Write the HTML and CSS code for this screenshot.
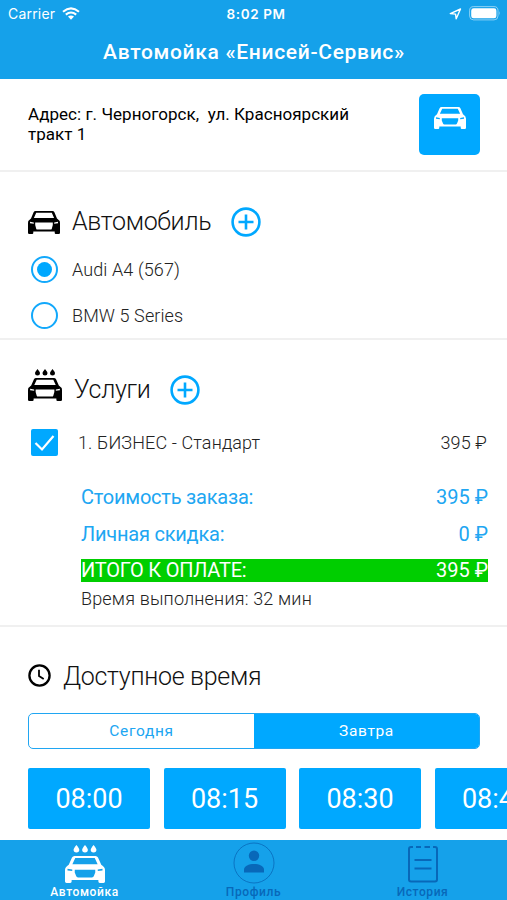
FILE: index.html
```
<!DOCTYPE html>
<html lang="ru">
<head>
  <meta charset="UTF-8">
  <meta name="viewport" content="width=device-width, initial-scale=1.0">
  <title>Автомойка «Енисей-Сервис»</title>
  <link rel="stylesheet" href="styles.css">
</head>
<body>
  <!-- Общие иконки -->
  <svg class="icon-defs" width="0" height="0">
    <symbol id="car" viewBox="0 0 32 22" preserveAspectRatio="none">
      <path fill-rule="evenodd" d="M7.6 0H24.4Q25.8 0 26.4 1.3L29 7.2Q32 9 32 11.5V20.8Q32 22 30.8 22H27.8Q26.7 22 26.7 20.8V19.5H5.3V20.8Q5.3 22 4.2 22H1.2Q0 22 0 20.8V11.5Q0 9 3 7.2L5.6 1.3Q6.2 0 7.6 0ZM8.2 1.7L5.9 6.7H26.1L23.8 1.7ZM2 10.3V11.8L5.8 12.3V11ZM30 10.3L26.2 11V12.3L30 11.8ZM7.8 11.3V13.4L9 16.6Q9.4 17.5 10.4 17.5H21.6Q22.6 17.5 23 16.6L24.2 13.4V11.3Z"/>
    </symbol>
    <symbol id="car-filled" viewBox="0 0 32 22" preserveAspectRatio="none">
      <path fill-rule="evenodd" d="M7.6 0H24.4Q25.8 0 26.4 1.3L29 7.2Q32 9 32 11.5V20.8Q32 22 30.8 22H27.8Q26.7 22 26.7 20.8V19.5H5.3V20.8Q5.3 22 4.2 22H1.2Q0 22 0 20.8V11.5Q0 9 3 7.2L5.6 1.3Q6.2 0 7.6 0ZM8.2 1.7L5.9 6.7H26.1L23.8 1.7ZM2 10.3V11.8L5.8 12.3V11ZM30 10.3L26.2 11V12.3L30 11.8ZM7.2 11V13.4L8.2 17Q8.5 17.8 9.4 17.8H22.6Q23.5 17.8 23.8 17L24.8 13.4V11Z"/>
    </symbol>
    <symbol id="drops" viewBox="0 0 34 7">
      <path d="M9.5 0Q12 3 12 4.2A2.4 2.3 0 0 1 7 4.2Q7 3 9.5 0ZM17 0Q19.5 3 19.5 4.2A2.4 2.3 0 0 1 14.5 4.2Q14.5 3 17 0ZM24.5 0Q27 3 27 4.2A2.4 2.3 0 0 1 22 4.2Q22 3 24.5 0Z"/>
    </symbol>
    <symbol id="plus" viewBox="0 0 30 30">
      <circle cx="15" cy="15" r="13.4" fill="none" stroke="currentColor" stroke-width="2.6"/>
      <path d="M15 7.5V22.5M7.5 15H22.5" fill="none" stroke="currentColor" stroke-width="2.6"/>
    </symbol>
  </svg>

  <div class="app">
    <header class="header">
      <div class="status-bar">
        <div class="carrier">
          <span>Carrier</span>
          <svg width="18" height="13" viewBox="0 0 18 13">
            <path d="M1 4.7Q9-2 17 4.7M3.8 7.6Q9 3.4 14.2 7.6" fill="none" stroke="#fff" stroke-width="2.1"/>
            <path d="M6 9.6Q9 7.3 12 9.6L9 12.7Z" fill="#fff"/>
          </svg>
        </div>
        <span class="clock">8:02 PM</span>
        <div class="indicators">
          <svg width="13" height="12" viewBox="0 0 13 12">
            <path d="M1.3 5.6L11.5 1L7.2 10.8L6.6 6.1Z" fill="none" stroke="#fff" stroke-width="1.4" stroke-linejoin="round"/>
          </svg>
          <svg width="32" height="15" viewBox="0 0 32 15">
            <rect x=".6" y=".6" width="28.4" height="13.3" rx="4" fill="none" stroke="#fff" stroke-opacity=".5"/>
            <rect x="2.2" y="2.3" width="25.2" height="10" rx="2.4" fill="#fff"/>
            <path d="M30.2 5Q31.6 7.2 30.2 9.5Z" fill="#fff" fill-opacity=".6"/>
          </svg>
        </div>
      </div>
      <h1>Автомойка «Енисей-Сервис»</h1>
    </header>

    <section class="address">
      <p>Адрес: г. Черногорск,  ул. Красноярский тракт 1</p>
      <button class="car-button">
        <svg width="32" height="22"><use href="#car"/></svg>
      </button>
    </section>

    <section class="cars">
      <div class="title">
        <svg width="32" height="23"><use href="#car-filled"/></svg>
        <h2 class="title-cars">Автомобиль</h2>
        <svg class="add" width="30" height="30"><use href="#plus"/></svg>
      </div>
      <div class="option">
        <span class="radio checked"></span>
        <span>Audi A4 (567)</span>
      </div>
      <div class="option">
        <span class="radio"></span>
        <span>BMW 5 Series</span>
      </div>
    </section>

    <section class="services">
      <div class="title">
        <svg class="wash-icon" width="34" height="32">
          <use href="#drops" width="34" height="7"/>
          <use href="#car-filled" y="9" width="34" height="23"/>
        </svg>
        <h2 class="title-services">Услуги</h2>
        <svg class="add" width="30" height="30"><use href="#plus"/></svg>
      </div>
      <div class="service">
        <span class="checkbox">
          <svg width="27" height="27" viewBox="0 0 27 27">
            <path d="M4.5 14L11 20.5L22.5 7" fill="none" stroke="#fff" stroke-width="2.2"/>
          </svg>
        </span>
        <span class="service-name">1. БИЗНЕС - Стандарт</span>
        <span class="price">395 ₽</span>
      </div>
      <div class="summary">
        <div class="sum-row"><span class="sum-label">Стоимость заказа:</span><span>395 ₽</span></div>
        <div class="sum-row"><span class="sum-label">Личная скидка:</span><span>0 ₽</span></div>
        <div class="sum-row total"><span class="sum-label">ИТОГО К ОПЛАТЕ:</span><span>395 ₽</span></div>
        <p class="duration">Время выполнения: 32 мин</p>
      </div>
    </section>

    <section class="schedule">
      <div class="title">
        <svg class="clock-icon" width="23" height="23" viewBox="0 0 23 23">
          <circle cx="11.5" cy="11.5" r="10.1" fill="none" stroke="#000" stroke-width="2.3"/>
          <path d="M11 5.7V12L15.7 15" fill="none" stroke="#000" stroke-width="1.8"/>
        </svg>
        <h2 class="title-schedule">Доступное время</h2>
      </div>
      <div class="days">
        <span class="day">Сегодня</span>
        <span class="day active">Завтра</span>
      </div>
      <div class="slots">
        <span class="slot">08:00</span>
        <span class="slot">08:15</span>
        <span class="slot">08:30</span>
        <span class="slot">08:45</span>
      </div>
    </section>

    <nav class="tabs">
      <div class="tab active">
        <svg width="40" height="39">
          <use href="#drops" width="40" height="8"/>
          <use href="#car" y="11" width="40" height="27"/>
        </svg>
        <span>Автомойка</span>
      </div>
      <div class="tab">
        <svg width="42" height="42" viewBox="0 0 42 42">
          <circle cx="21" cy="21" r="20" fill="none" stroke="currentColor" stroke-width=".8"/>
          <circle cx="21" cy="13.7" r="5.2"/>
          <path d="M11 30.5V27.5C11 20 31 20 31 27.5V30.5Z"/>
        </svg>
        <span>Профиль</span>
      </div>
      <div class="tab">
        <svg width="30" height="39" viewBox="0 0 30 39">
          <path d="M5 2H3Q1 2 1 4V34.5Q1 36.5 3 36.5H27Q29 36.5 29 34.5V4Q29 2 27 2H25M8 2H13M16.5 2H22M6.5 15H23.5M6.5 23.5H23.5" fill="none" stroke="currentColor" stroke-width="2"/>
        </svg>
        <span>История</span>
      </div>
    </nav>
  </div>
</body>
</html>
```
FILE: styles.css
```
* {
  box-sizing: border-box;
}
body {
  margin: 0;
  font-family: Roboto, "Noto Sans", sans-serif;
  background: #fff;
  color: #000;
}
h1, h2, p {
  margin: 0;
}
svg {
  display: block;
  flex: none;
}
.icon-defs {
  display: none;
}
.app {
  display: flex;
  flex-direction: column;
  width: 507px;
  height: 900px;
  overflow: hidden;
}
.header {
  height: 79px;
  background: #15a1ea;
  color: #fff;
  text-align: center;
}
.status-bar {
  display: grid;
  grid-template-columns: 1fr auto 1fr;
  align-items: center;
  height: 27px;
  padding: 0 6px 0 8px;
  font-family: Inter, sans-serif;
  font-size: 14px;
}
.carrier {
  display: flex;
  gap: 7px;
  align-items: center;
  letter-spacing: 0.2px;
}
.clock {
  padding-left: 3px;
  font-size: 13.5px;
  font-weight: 600;
  letter-spacing: 0.6px;
}
.indicators {
  display: flex;
  gap: 7px;
  align-items: center;
  justify-content: flex-end;
}
h1 {
  padding-left: 1px;
  font-size: 21px;
  font-weight: 500;
  line-height: 51px;
  letter-spacing: 0.68px;
}
section {
  border-bottom: 2px solid #f0f0f0;
}
.address {
  display: flex;
  justify-content: space-between;
  height: 93px;
  padding: 15px 27px 0 28px;
}
.address p {
  width: 340px;
  padding-top: 10px;
  font-size: 17px;
  line-height: 20px;
  letter-spacing: 0.04px;
  white-space: pre-wrap;
}
.car-button {
  display: flex;
  justify-content: center;
  width: 61px;
  height: 61px;
  padding: 13px 0 0;
  border: none;
  border-radius: 5px;
  background: #00a8ff;
  fill: #fff;
}
.title {
  display: flex;
  align-items: center;
  height: 40px;
  padding-left: 28px;
}
h2 {
  color: #111;
  font-size: 25px;
  font-weight: 300;
  line-height: 42px;
  letter-spacing: -0.3px;
}
.title-cars {
  width: 159px;
  margin-left: 12px;
}
.title-services {
  width: 96px;
  margin-left: 12px;
}
.title-schedule {
  margin-left: 12px;
}
.add {
  color: #00a8ff;
}
.cars {
  height: 168px;
  padding-top: 30px;
}
.option {
  display: flex;
  gap: 14px;
  align-items: center;
  height: 46px;
  padding-left: 31px;
  color: #222;
  font-size: 18px;
  font-weight: 300;
  letter-spacing: 0.1px;
}
.cars .title {
  margin-bottom: 4px;
}
.radio {
  width: 27px;
  height: 27px;
  border: 2.5px solid #12a8fb;
  border-radius: 50%;
}
.radio.checked {
  padding: 4px;
  background: #00a8ff content-box;
}
.services {
  height: 287px;
  padding-top: 30px;
}
.wash-icon {
  margin-top: -11px;
}
.service {
  display: flex;
  align-items: center;
  height: 40px;
  margin-top: 12px;
  padding: 0 20px 0 31px;
  color: #222;
  font-size: 18px;
  font-weight: 300;
  letter-spacing: 0.12px;
}
.checkbox {
  width: 27px;
  height: 27px;
  border-radius: 2px;
  background: #00a8ff;
}
.service-name {
  flex: 1;
  margin-left: 20px;
}
.summary {
  margin-top: 24px;
  padding: 0 19px 0 81px;
}
.sum-row {
  display: flex;
  justify-content: space-between;
  height: 23px;
  margin-bottom: 13.5px;
  color: #20a6f2;
  font-size: 20px;
  line-height: 23px;
}
.sum-label {
  letter-spacing: -0.22px;
}
.sum-row.total {
  margin-bottom: 0;
  background: #00ce00;
  color: #fff;
}
.duration {
  color: #222;
  font-size: 18px;
  font-weight: 300;
  line-height: 33px;
  letter-spacing: 0.17px;
}
.schedule {
  height: 213px;
  padding-top: 30px;
  border: none;
}
.clock-icon {
  margin-top: -3px;
}
.days {
  display: flex;
  height: 36px;
  margin: 16px 27px 0 28px;
  border: 1px solid #20a6f2;
  border-radius: 5px;
  overflow: hidden;
}
.day {
  flex: 1;
  color: #20a6f2;
  font-size: 15.5px;
  line-height: 35px;
  letter-spacing: 0.65px;
  text-align: center;
}
.day.active {
  background: #00a8ff;
  color: #fff;
}
.slots {
  display: flex;
  gap: 13.5px;
  margin-top: 19px;
  padding-left: 28px;
}
.slot {
  flex: none;
  width: 122px;
  height: 61px;
  border-radius: 2px;
  background: #00a8ff;
  color: #fff;
  font-size: 27px;
  line-height: 63px;
  text-align: center;
}
.tabs {
  display: grid;
  grid-template-columns: repeat(3, 1fr);
  height: 60px;
  background: #15a1ea;
}
.tab {
  display: flex;
  flex-direction: column;
  justify-content: flex-end;
  align-items: center;
  color: #0868b9;
  fill: currentColor;
  font-size: 12px;
  font-weight: 500;
  line-height: 16px;
  letter-spacing: 0.6px;
}
.tab.active {
  color: #fff;
}
```
